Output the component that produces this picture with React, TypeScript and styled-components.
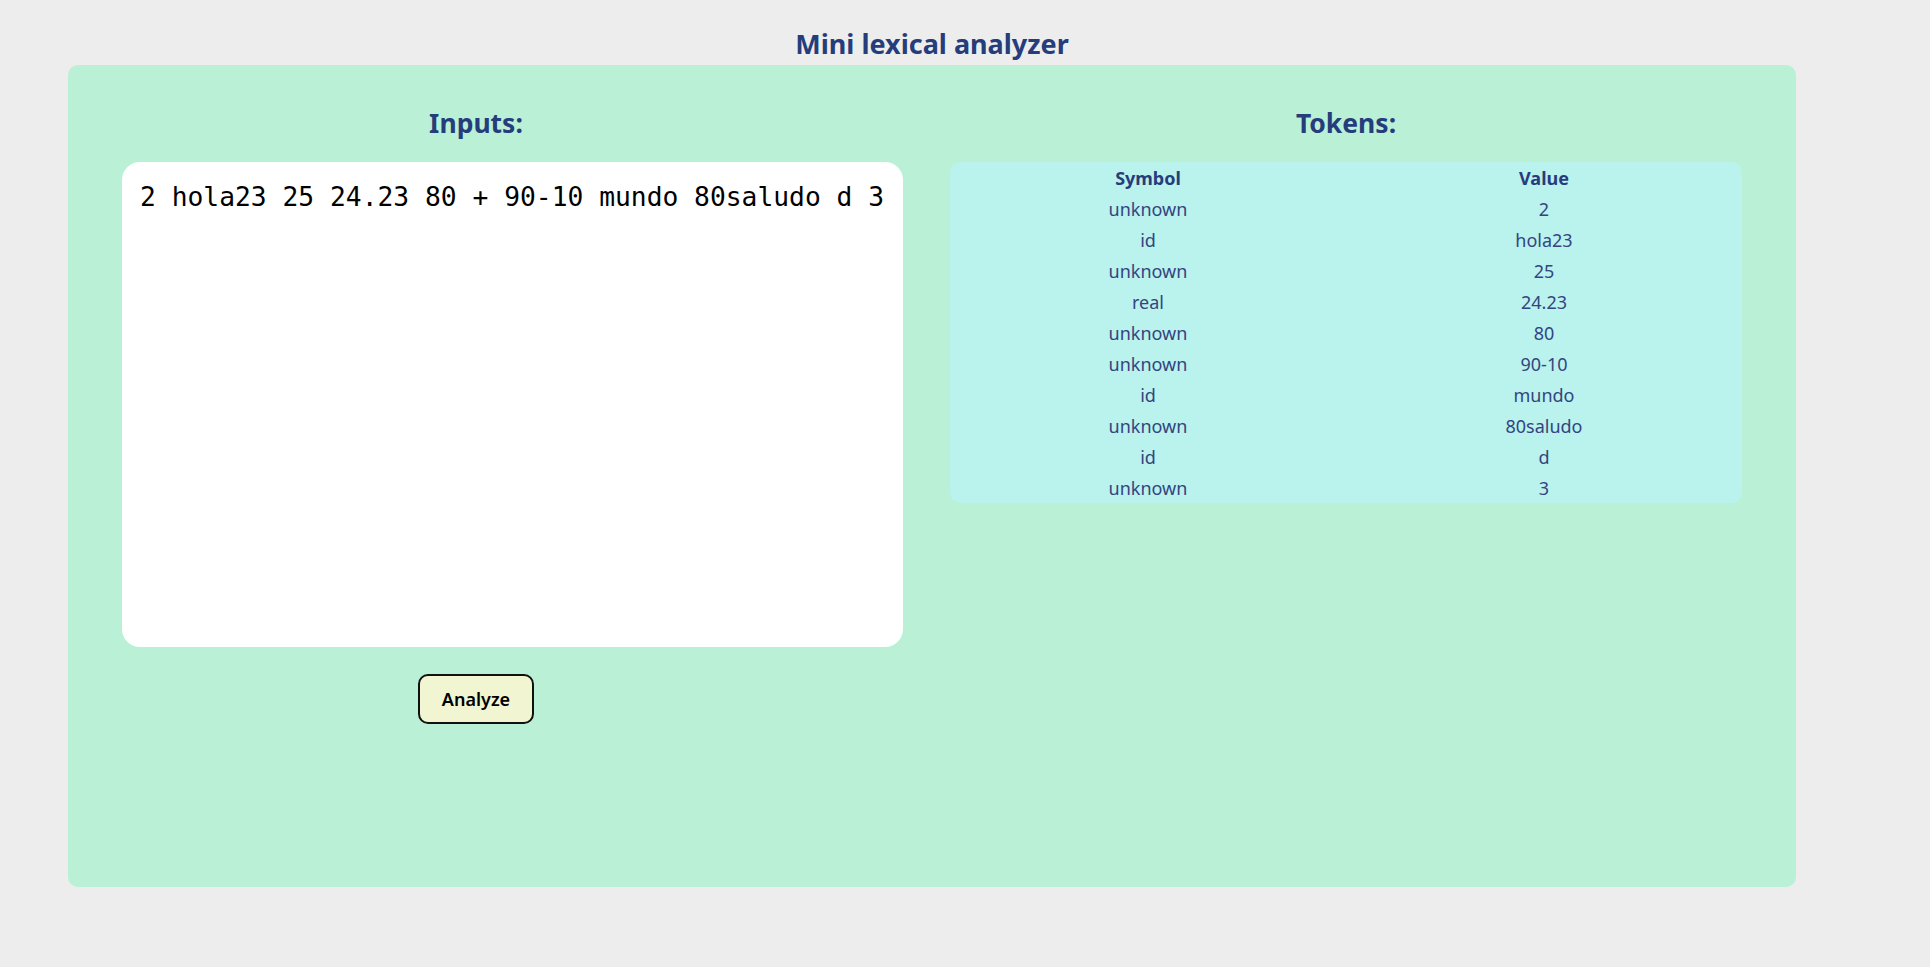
import React from "react";
import styled, { createGlobalStyle } from "styled-components";

const Global = createGlobalStyle`
  html, body {
    margin: 0;
    padding: 0;
    background: #ededed;
    font-family: "Noto Sans", "Open Sans", sans-serif;
  }
  * { box-sizing: border-box; }
`;

const Page = styled.div`
  width: 1728px;
  margin-left: 68px;
  display: flex;
  flex-direction: column;
`;

const Title = styled.h1`
  margin: 0;
  height: 65px;
  padding-top: 29px;
  font-size: 27px;
  line-height: 30px;
  font-weight: 700;
  color: #263d7b;
  text-align: center;
`;

const Panel = styled.main`
  height: 822px;
  background: #b9f0d6;
  border-radius: 10px;
  padding-top: 43px;
  display: grid;
  grid-template-columns: 816px 1fr;
  align-items: start;
`;

const Column = styled.section<{ $shift?: number }>`
  display: flex;
  flex-direction: column;
  align-items: center;
  padding-left: ${(p) => p.$shift ?? 0}px;
`;

const Heading = styled.h2`
  margin: 0 0 24px;
  font-size: 26.5px;
  line-height: 30px;
  height: 30px;
  font-weight: 700;
  color: #263d7b;
`;

const Editor = styled.textarea`
  align-self: flex-start;
  margin-left: 54px;
  width: 781px;
  height: 485px;
  border: none;
  outline: none;
  resize: none;
  overflow: hidden;
  border-radius: 18px;
  background: #ffffff;
  padding: 20px 16px 19px 18px;
  font-family: "DejaVu Sans Mono", "Liberation Mono", monospace;
  font-size: 26.3px;
  color: #000;
`;

const AnalyzeButton = styled.button`
  margin-top: 27px;
  width: 116px;
  height: 50px;
  background: #f1f5d1;
  border: 2px solid #111;
  border-radius: 10px;
  font-family: "Noto Sans", "Open Sans", sans-serif;
  font-size: 18px;
  font-weight: 600;
  color: #000;
  cursor: pointer;
`;

const TokenTable = styled.table`
  width: 792px;
  background: #baf2ee;
  border-radius: 10px;
  border-collapse: separate;
  border-spacing: 0;
  table-layout: fixed;
  color: #33457f;
  font-size: 18px;
`;

const HeadCell = styled.th`
  height: 31px;
  padding: 0;
  font-weight: 700;
  text-align: center;
  color: #263d7b;
`;

const Cell = styled.td`
  height: 31px;
  padding: 0;
  text-align: center;
`;

const tokens: [string, string][] = [
  ["unknown", "2"],
  ["id", "hola23"],
  ["unknown", "25"],
  ["real", "24.23"],
  ["unknown", "80"],
  ["unknown", "90-10"],
  ["id", "mundo"],
  ["unknown", "80saludo"],
  ["id", "d"],
  ["unknown", "3"],
];

export default function App() {
  return (
    <>
      <Global />
      <Page>
        <Title>Mini lexical analyzer</Title>
        <Panel>
          <Column>
            <Heading>Inputs:</Heading>
            <Editor
              spellCheck={false}
              defaultValue="2 hola23 25 24.23 80 + 90-10 mundo 80saludo d 3"
            />
            <AnalyzeButton>Analyze</AnalyzeButton>
          </Column>
          <Column $shift={12}>
            <Heading>Tokens:</Heading>
            <TokenTable>
              <thead>
                <tr>
                  <HeadCell>Symbol</HeadCell>
                  <HeadCell>Value</HeadCell>
                </tr>
              </thead>
              <tbody>
                {tokens.map(([s, v], i) => (
                  <tr key={i}>
                    <Cell>{s}</Cell>
                    <Cell>{v}</Cell>
                  </tr>
                ))}
              </tbody>
            </TokenTable>
          </Column>
        </Panel>
      </Page>
    </>
  );
}
